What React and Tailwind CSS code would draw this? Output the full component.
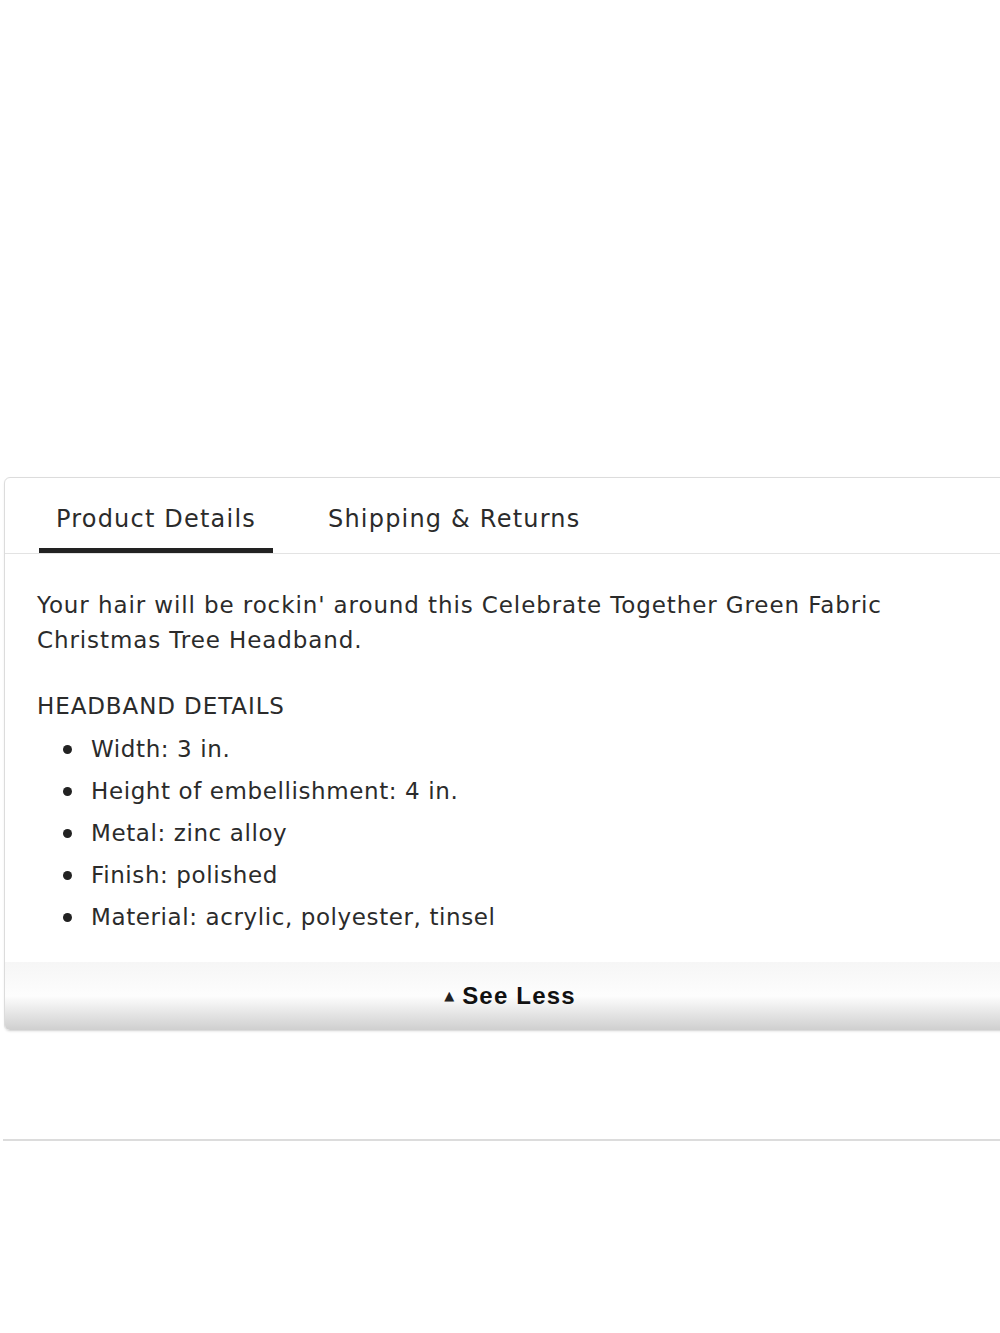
const items = [
  'Width: 3 in.',
  'Height of embellishment: 4 in.',
  'Metal: zinc alloy',
  'Finish: polished',
  'Material: acrylic, polyester, tinsel',
];

export default function App() {
  return (
    <div className="w-[1000px] h-[1333px] overflow-hidden bg-white" style={{ fontFamily: '"DejaVu Sans", "Open Sans", sans-serif' }}>
      <div className="h-[477px]" />
      <div className="ml-[4px] w-[1010px] border border-[#dcdcdc] rounded-l-[6px] overflow-hidden shadow-[0_1px_2px_rgba(0,0,0,0.08)]">
        <div className="flex h-[76px] border-b border-[#e3e3e3] pl-[34px] text-[#2b2b2b] text-[24px] tracking-[1.2px]">
          <div className="relative w-[234px] flex items-center pt-[7px] pl-[17px]">
            Product Details
            <div className="absolute left-0 right-0 bottom-0 h-[5px] bg-[#222]" />
          </div>
          <div className="flex items-center pt-[7px] pl-[55px]">Shipping &amp; Returns</div>
        </div>
        <div className="pl-[32px] pt-[34px] pb-[24px] text-[#2b2b2b] text-[23px] leading-[35px] tracking-[0.9px]">
          <p>Your hair will be rockin' around this Celebrate Together Green Fabric<br />Christmas Tree Headband.</p>
          <p className="mt-[31px]">HEADBAND DETAILS</p>
          <ul className="mt-[4px] leading-[42px] tracking-[0.6px]">
            {items.map((t) => (
              <li key={t} className="flex items-center">
                <span className="ml-[26px] mr-[19px] w-[9px] h-[9px] rounded-full bg-[#222] shrink-0" />
                <span>{t}</span>
              </li>
            ))}
          </ul>
        </div>
        <div className="h-[68px] flex items-center justify-center bg-gradient-to-b from-[#f6f6f6] via-[#fdfdfd] to-[#cfcfcf] pl-[2px]">
          <span className="text-[13px] text-[#222] mr-[8px]">▲</span>
          <span className="text-[24px] font-bold text-[#111] tracking-[1.2px]" style={{ fontFamily: '"Liberation Sans", Arial, sans-serif' }}>See Less</span>
        </div>
      </div>
      <div className="mt-[108px] ml-[3px] h-[2px] bg-[#dcdcdc]" />
    </div>
  );
}
